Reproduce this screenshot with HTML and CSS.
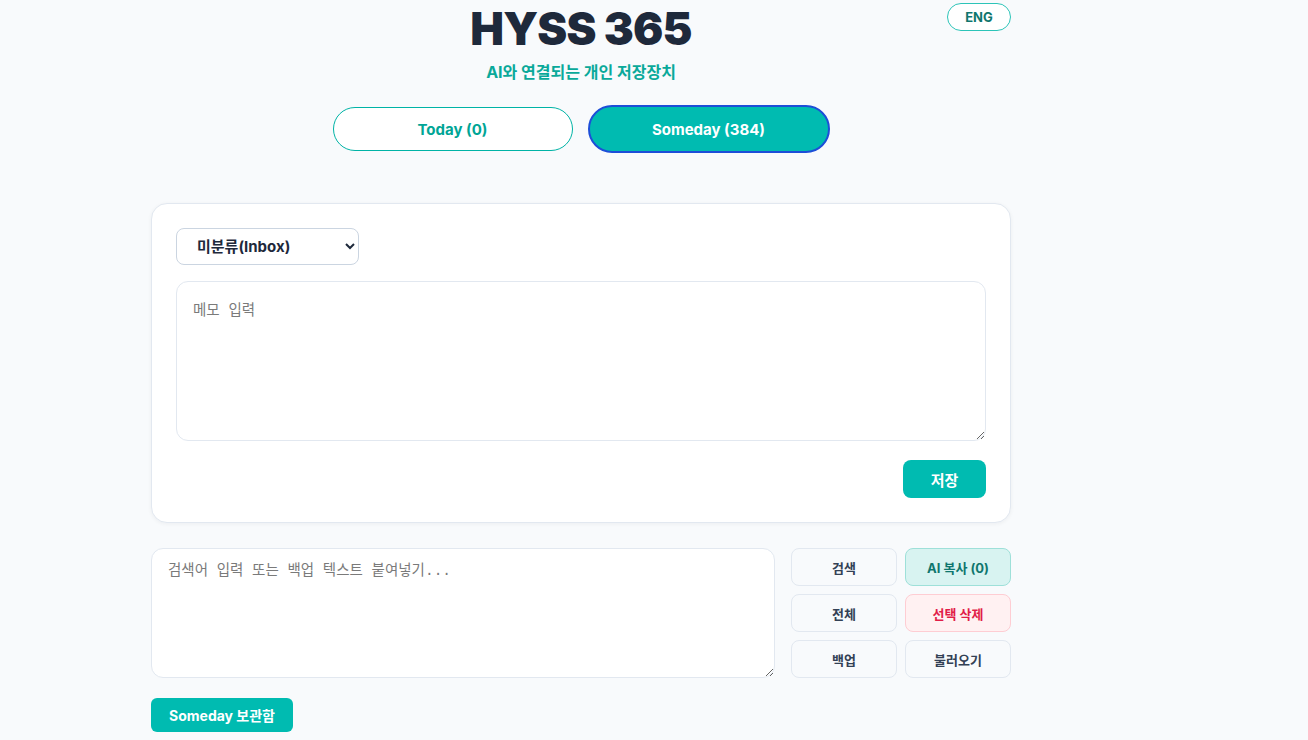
FILE: index.html
```html
<!DOCTYPE html>
<html lang="ko">
<head>
	<meta charset="UTF-8">
	<title>HYSS 365</title>
	<link rel="stylesheet" href="styles.css">
</head>
<body>
	<div class="app">
		<header class="top">
			<button class="langBtn">ENG</button>
			<h1 class="logo">HYSS 365</h1>
			<p class="tagline">AI와 연결되는 개인 저장장치</p>
			<nav class="tabs">
				<button class="tab">Today (0)</button>
				<button class="tab on">Someday (384)</button>
			</nav>
		</header>

		<!-- 메모 입력 카드 -->
		<section class="card">
			<select class="catSelect">
				<option>미분류(Inbox)</option>
			</select>
			<textarea class="memo" placeholder="메모 입력"></textarea>
			<div class="cardFoot">
				<button class="saveBtn">저장</button>
			</div>
		</section>

		<!-- 검색 / 도구 -->
		<section class="tools">
			<textarea class="search" placeholder="검색어 입력 또는 백업 텍스트 붙여넣기..."></textarea>
			<div class="toolGrid">
				<button class="tool">검색</button>
				<button class="tool ai">AI 복사 (0)</button>
				<button class="tool">전체</button>
				<button class="tool del">선택 삭제</button>
				<button class="tool">백업</button>
				<button class="tool">불러오기</button>
			</div>
		</section>

		<div class="boxBar">
			<button class="boxBtn">Someday 보관함</button>
		</div>
	</div>
</body>
</html>
```

FILE: styles.css
```css
* {
	box-sizing: border-box;
	margin: 0;
	padding: 0;
}
html {
	overflow-y: scroll;
}
/* 스크롤바 */
::-webkit-scrollbar {
	width: 15px;
}
::-webkit-scrollbar-track {
	background: #fafafa;
	border-left: 1px solid #e6e6e6;
	border-right: 1px solid #ececec;
}
::-webkit-scrollbar-thumb {
	background: transparent;
}
body {
	background: #f8fafc;
	font-family: "Inter", "Noto Sans CJK KR", sans-serif;
	color: #1e293b;
}
button {
	font-family: inherit;
	cursor: pointer;
}
.app {
	width: 860px;
	margin-left: 151px;
	padding-bottom: 200px;
}

/* 상단 로고 + 탭 */
.top {
	position: relative;
	text-align: center;
	padding-top: 3px;
}
.langBtn {
	position: absolute;
	top: 3px;
	right: 0;
	width: 64px;
	height: 28px;
	border: 1px solid #2cc4b8;
	border-radius: 14px;
	background: #fff;
	color: #0f766e;
	font-size: 13px;
	font-weight: 700;
}
.logo {
	font-size: 45px;
	font-weight: 900;
	line-height: 52px;
	letter-spacing: -0.8px;
	color: #1e293b;
}
.tagline {
	margin-top: 6px;
	font-size: 16px;
	font-weight: 700;
	color: #0aa99a;
	line-height: 22px;
}
.tabs {
	display: flex;
	justify-content: center;
	gap: 15px;
	margin-top: 24px;
}
.tab {
	width: 240px;
	height: 44px;
	border: 1px solid #00b3a6;
	border-radius: 22px;
	background: #fff;
	color: #00a596;
	font-size: 15px;
	font-weight: 700;
}
.tab.on {
	width: 242px;
	height: 48px;
	margin-top: -2px;
	border: 2px solid #1d4ed8;
	border-radius: 24px;
	background: #00bbb1;
	color: #fff;
}

/* 카드 */
.card {
	margin-top: 50px;
	background: #fff;
	border: 1px solid #e2e8f0;
	border-radius: 16px;
	box-shadow: 0 1px 4px rgba(15, 23, 42, 0.05);
	padding: 24px;
}
.catSelect {
	display: block;
	width: 183px;
	height: 37px;
	padding: 0 10px 0 16px;
	border: 1px solid #cbd5e1;
	border-radius: 8px;
	background: #fff;
	font-family: inherit;
	font-size: 15px;
	font-weight: 700;
	color: #1e293b;
}
.memo, .search {
	display: block;
	border: 1px solid #e2e8f0;
	border-radius: 12px;
	background: #fff;
	padding: 18px 16px;
	font-family: "Liberation Mono", "Noto Sans CJK KR", monospace;
	font-size: 14.5px;
	line-height: 22px;
	color: #1e293b;
	resize: vertical;
}
.memo::placeholder, .search::placeholder {
	color: #7a7a7a;
}
.memo {
	width: 100%;
	height: 160px;
	margin-top: 16px;
}
.cardFoot {
	display: flex;
	justify-content: flex-end;
	margin-top: 19px;
}
.saveBtn {
	width: 83px;
	height: 38px;
	border: none;
	border-radius: 8px;
	background: #00bbb1;
	color: #fff;
	font-size: 15px;
	font-weight: 700;
}

/* 검색 영역 */
.tools {
	display: flex;
	gap: 16px;
	margin-top: 25px;
}
.search {
	flex: 1;
	height: 130px;
	padding: 11px 16px;
}
.toolGrid {
	display: grid;
	grid-template-columns: 106px 106px;
	grid-auto-rows: 38px;
	gap: 8px;
}
.tool {
	border: 1px solid #e2e8f0;
	border-radius: 8px;
	background: #f8fafc;
	color: #334155;
	font-size: 13px;
	font-weight: 700;
}
.tool.ai {
	background: #d8f3f1;
	border-color: #9ee0d9;
	color: #0f766e;
}
.tool.del {
	background: #fff1f2;
	border-color: #fecdd3;
	color: #e11d48;
}

.boxBar {
	margin-top: 20px;
}
.boxBtn {
	width: 142px;
	height: 34px;
	border: none;
	border-radius: 6px;
	background: #00bbb1;
	color: #fff;
	font-size: 14px;
	font-weight: 700;
}
```
